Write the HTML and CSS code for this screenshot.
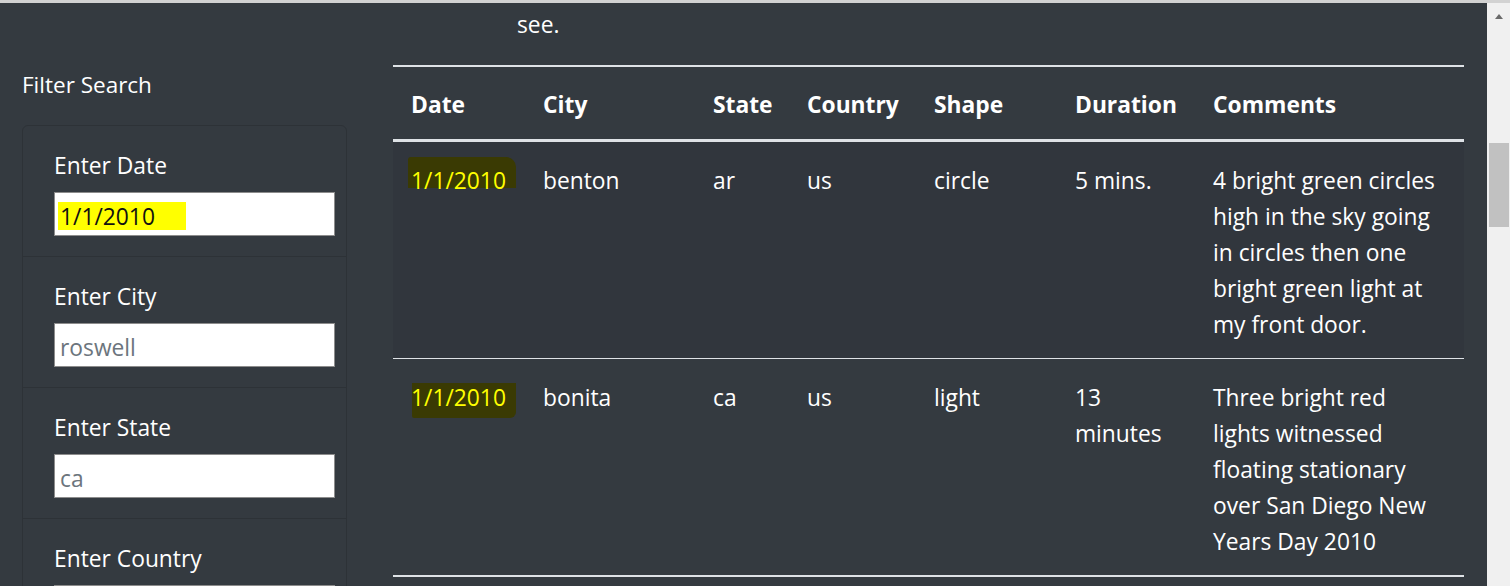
FILE: index.html
```html
<!DOCTYPE html>
<html lang="en">
<head>
<meta charset="utf-8">
<title>UFO Sightings</title>
<link rel="stylesheet" href="styles.css">
</head>
<body>
<div class="window">
  <div class="page">
    <aside class="filters">
      <h2 class="filters-title">Filter Search</h2>
      <ul class="filter-list">
        <li class="filter-item">
          <label class="filter-label" for="date">Enter Date</label>
          <input class="filter-input filter-input-marked" id="date" type="text" value="1/1/2010">
        </li>
        <li class="filter-item">
          <label class="filter-label" for="city">Enter City</label>
          <input class="filter-input" id="city" type="text" placeholder="roswell">
        </li>
        <li class="filter-item">
          <label class="filter-label" for="state">Enter State</label>
          <input class="filter-input" id="state" type="text" placeholder="ca">
        </li>
        <li class="filter-item">
          <label class="filter-label" for="country">Enter Country</label>
          <input class="filter-input" id="country" type="text">
        </li>
      </ul>
    </aside>
    <main class="results">
      <p class="intro">see.</p>
      <table class="ufo-table">
        <colgroup>
          <col class="c-date"><col class="c-city"><col class="c-state"><col class="c-country"><col class="c-shape"><col class="c-duration"><col class="c-comments">
        </colgroup>
        <thead>
          <tr>
            <th>Date</th><th>City</th><th>State</th><th>Country</th><th>Shape</th><th>Duration</th><th>Comments</th>
          </tr>
        </thead>
        <tbody>
          <tr class="row-striped">
            <td><span class="hl hl-high">1/1/2010</span></td>
            <td>benton</td>
            <td>ar</td>
            <td>us</td>
            <td>circle</td>
            <td>5 mins.</td>
            <td>4 bright green circles high in the sky going in circles then one bright green light at my front door.</td>
          </tr>
          <tr>
            <td><span class="hl hl-low">1/1/2010</span></td>
            <td>bonita</td>
            <td>ca</td>
            <td>us</td>
            <td>light</td>
            <td>13 minutes</td>
            <td>Three bright red lights witnessed floating stationary over San Diego New Years Day 2010</td>
          </tr>
        </tbody>
      </table>
    </main>
  </div>
  <div class="scrollbar" aria-hidden="true">
    <div class="scroll-arrow"></div>
    <div class="scroll-thumb"></div>
  </div>
</div>
</body>
</html>
```
FILE: styles.css
```css
html, body {
  margin: 0;
  padding: 0;
  height: 100%;
  overflow: hidden;
}

body {
  background: #343a40;
  color: #ffffff;
  font-family: "Open Sans", "Noto Sans", "DejaVu Sans", sans-serif;
  font-size: 22.8px;
  line-height: 36px;
  border-top: 3px solid #d2d2d2;
  box-sizing: border-box;
}

.window {
  display: flex;
  height: 100%;
}

.page {
  flex: 1;
  display: grid;
  grid-template-columns: 325px 1071px;
  column-gap: 46px;
  padding: 0 23px 0 22px;
  align-items: start;
}

/* ---------- filters ---------- */
.filters-title {
  margin: 64px 0 22px 0;
  font-size: 22.5px;
  font-weight: 400;
  line-height: 36px;
}

.filter-list {
  list-style: none;
  margin: 0;
  padding: 0;
  border: 1px solid #2d3237;
  border-radius: 6px;
}

.filter-item {
  display: flex;
  flex-direction: column;
  align-items: flex-start;
  padding: 22px 11px 20px 31px;
  border-top: 1px solid #2d3237;
}

.filter-item:first-child {
  border-top: 0;
}

.filter-label {
  line-height: 36px;
  margin-bottom: 8px;
}

.filter-input {
  box-sizing: border-box;
  width: 281px;
  height: 44px;
  margin: 0;
  padding: 4px 5px 0 5px;
  border: 1px solid #8c8c8c;
  border-radius: 0;
  background: #ffffff;
  color: #111111;
  font-family: inherit;
  font-size: 22.8px;
  outline: none;
}

.filter-input::placeholder {
  color: #6c757d;
  opacity: 1;
}

.filter-input-marked {
  background-image: linear-gradient(#ffff00, #ffff00);
  background-repeat: no-repeat;
  background-size: 128px 28px;
  background-position: 3px 9px;
}

/* ---------- results ---------- */
.intro {
  margin: 4px 0 22px 0;
  padding-left: 124px;
  line-height: 36px;
}

.ufo-table {
  width: 1071px;
  table-layout: fixed;
  border-collapse: collapse;
  border-top: 2px solid #dee2e6;
  border-bottom: 2px solid #dee2e6;
}

.c-date { width: 132px; }
.c-city { width: 170px; }
.c-state { width: 94px; }
.c-country { width: 127px; }
.c-shape { width: 141px; }
.c-duration { width: 138px; }
.c-comments { width: 269px; }

.ufo-table th,
.ufo-table td {
  padding: 21px 18px 15px 18px;
  text-align: left;
  vertical-align: top;
  line-height: 36px;
}

.ufo-table th {
  padding-top: 20px;
  padding-bottom: 16px;
  font-weight: 700;
  border-bottom: 3px solid #dee2e6;
}

.ufo-table td {
  border-top: 1px solid #dee2e6;
}

.ufo-table tbody tr:first-child td {
  border-top: 0;
}

.row-striped {
  background: #31363d;
}

.hl {
  position: relative;
  display: inline-block;
  z-index: 0;
  color: #ffff00;
}

.hl::before {
  content: "";
  position: absolute;
  z-index: -1;
  background: #3a3a03;
}

.hl-high::before {
  left: -3px;
  right: -10px;
  top: -6px;
  bottom: 11px;
  border-radius: 3px 10px 0 0;
}

.hl-low::before {
  left: 1px;
  right: -10px;
  top: 3px;
  bottom: -2px;
  border-radius: 0 0 6px 2px;
}

/* ---------- fake window scrollbar ---------- */
.scrollbar {
  flex: 0 0 23px;
  background: #f0f0f0;
  display: flex;
  flex-direction: column;
  align-items: center;
  padding-top: 11px;
}

.scroll-arrow {
  width: 0;
  height: 0;
  border-left: 4.5px solid transparent;
  border-right: 4.5px solid transparent;
  border-bottom: 5px solid #6a6a6a;
}

.scroll-thumb {
  width: 20px;
  height: 84px;
  margin-top: 124px;
  background: #c1c1c1;
}
```
